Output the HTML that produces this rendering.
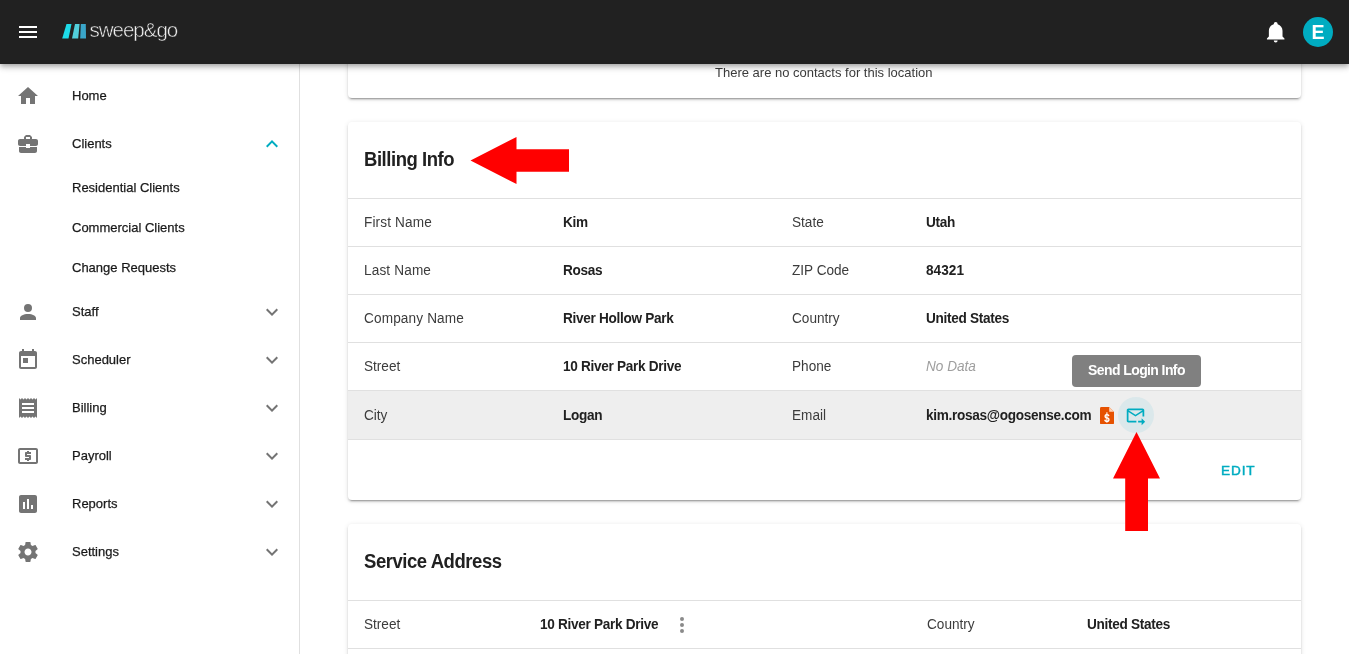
<!DOCTYPE html>
<html>
<head>
<meta charset="utf-8">
<title>Sweep&amp;Go</title>
<style>
*{box-sizing:border-box;margin:0;padding:0}
html,body{width:1349px;height:654px;overflow:hidden;background:#fff;font-size:14px;line-height:16px;font-family:"Liberation Sans",sans-serif;color:rgba(0,0,0,.87)}
.abs{position:absolute}
#app{position:absolute;left:0;top:0;width:1349px;height:654px;overflow:hidden;background:#fff;will-change:transform}

/* top bar */
#bar{position:absolute;left:0;top:0;width:1349px;height:64px;background:#212121;z-index:10;
 box-shadow:0 2px 4px -1px rgba(0,0,0,.2),0 4px 5px 0 rgba(0,0,0,.14),0 1px 10px 0 rgba(0,0,0,.12)}
#burger{position:absolute;left:19px;top:26px;width:18px;height:12px}
#burger i{position:absolute;left:0;width:18px;height:2px;background:#fff}
#logo{position:absolute;left:62px;top:22px}
#bell{position:absolute;left:1264.300px;top:20px}
#avatar{position:absolute;left:1303px;top:17px;width:30px;height:30px;border-radius:50%;background:#00acc1;color:#fff;
 font-weight:bold;font-size:19.600px;line-height:30.700px;text-align:center}

/* sidebar */
#side{position:absolute;left:0;top:64px;width:300px;height:590px;background:#fff;border-right:1px solid #e0e0e0;z-index:5}
.nav{position:absolute;left:72px;margin-top:.5px;font-size:13px;line-height:16px;color:rgba(0,0,0,.87);white-space:nowrap;-webkit-text-stroke:.25px rgba(0,0,0,.87)}
.ico{position:absolute;left:16px;width:24px;height:24px;fill:#747474}
.chev{position:absolute;left:260px;width:24px;height:24px;fill:#747474}

/* cards */
.card{position:absolute;left:348px;width:953px;background:#fff;border-radius:4px;
 box-shadow:0 3px 1px -2px rgba(0,0,0,.2),0 2px 2px 0 rgba(0,0,0,.14),0 1px 5px 0 rgba(0,0,0,.12)}
.title{position:absolute;left:16px;font-size:18.5px;line-height:22px;font-weight:bold;letter-spacing:-.45px;white-space:nowrap;color:#212121;transform:scaleY(1.07);transform-origin:0 17.400px}
.row{position:absolute;left:0;width:953px;height:48px;border-top:1px solid #e0e0e0}
.row span{position:absolute;top:16px;font-size:13.6px;line-height:16px;white-space:nowrap;transform:scaleY(1.06);transform-origin:0 12.700px}
.l{color:#3c3c3c}
.v{font-weight:bold;color:#212121;letter-spacing:-.3px}
.hl{background:#eeeeee}
.hl span{top:16.500px}
</style>
</head>
<body>
<div id="app">

<!-- cards -->
<div class="card" style="top:40px;height:58px">
  <span class="abs" style="left:367px;top:25px;font-size:13px;line-height:16px;white-space:nowrap;color:#3c3c3c">There are no contacts for this location</span>
</div>

<div class="card" style="top:122px;height:378px">
  <span class="title" style="top:27px">Billing Info</span>
  <div class="row" style="top:76px"><span class="l" style="left:16px;letter-spacing:.15px">First Name</span><span class="v" style="left:215px">Kim</span><span class="l" style="left:444px">State</span><span class="v" style="left:578px">Utah</span></div>
  <div class="row" style="top:124px"><span class="l" style="left:16px;letter-spacing:.15px">Last Name</span><span class="v" style="left:215px">Rosas</span><span class="l" style="left:444px">ZIP Code</span><span class="v" style="left:578px;letter-spacing:.05px">84321</span></div>
  <div class="row" style="top:172px"><span class="l" style="left:16px;letter-spacing:.15px">Company Name</span><span class="v" style="left:215px">River Hollow Park</span><span class="l" style="left:444px">Country</span><span class="v" style="left:578px">United States</span></div>
  <div class="row" style="top:220px"><span class="l" style="left:16px">Street</span><span class="v" style="left:215px">10 River Park Drive</span><span class="l" style="left:444px">Phone</span><span style="left:578px;font-style:italic;color:#9e9e9e">No Data</span></div>
  <div class="row hl" style="top:268px;height:50px;border-bottom:1px solid #e0e0e0"><span class="l" style="left:16px">City</span><span class="v" style="left:215px">Logan</span><span class="l" style="left:444px">Email</span><span class="v" style="left:578px">kim.rosas@ogosense.com</span></div>
  <span class="abs" style="left:873px;top:340.500px;font-size:13.600px;line-height:16px;letter-spacing:.9px;color:#00acc1;-webkit-text-stroke:.45px #00acc1">EDIT</span>
</div>

<div class="card" style="top:524px;height:140px">
  <span class="title" style="top:27px">Service Address</span>
  <div class="row" style="top:76px"><span class="l" style="left:16px">Street</span><span class="v" style="left:192px">10 River Park Drive</span><span class="l" style="left:579px">Country</span><span class="v" style="left:739px">United States</span></div>
  <div class="row" style="top:124px"></div>
</div>

<!-- overlays (page coordinates) -->
<div class="abs" id="tip" style="left:1072px;top:355px;width:129px;height:32px;border-radius:4px;background:#808080;color:#fff;font-size:14px;font-weight:bold;line-height:30px;text-align:center;letter-spacing:-.6px;white-space:nowrap"><span style="display:inline-block;transform:scaleY(1.06);transform-origin:50% 19.700px">Send Login Info</span></div>
<div class="abs" id="halo" style="left:1118px;top:397px;width:36px;height:36px;border-radius:50%;background:#dbe8eb"></div>
<svg class="abs" id="mail" style="left:1125.200px;top:404.500px" width="21" height="21" viewBox="0 0 24 24" fill="#00acc1"><path d="M20 4H4c-1.1 0-2 .9-2 2v12c0 1.1.9 2 2 2h9v-2H4V8l8 5 8-5v5h2V6c0-1.1-.9-2-2-2zm-8 7L4 6h16l-8 5zm7 4l4 4-4 4v-3h-4v-2h4v-3z"/></svg>
<svg class="abs" id="inv" style="left:1100px;top:406.800px" width="14" height="17.400" viewBox="0 0 14 17.400"><path d="M1.400 0H9.200L14 4.800V16a1.400 1.400 0 0 1-1.400 1.400H1.400A1.400 1.400 0 0 1 0 16V1.400A1.400 1.400 0 0 1 1.400 0z" fill="#e65100"/><path d="M9.200 0v4.800H14z" fill="#ffd2b3"/><text transform="translate(6.900 14.600) scale(.8 1)" font-family="Liberation Sans" font-weight="bold" font-size="11" fill="#fff" text-anchor="middle">S</text><rect x="6.350" y="5.300" width="1.100" height="10.400" fill="#fff"/></svg>
<svg class="abs" id="dots" style="left:670px;top:613px" width="24" height="24" viewBox="0 0 24 24" fill="#8a8a8a"><path d="M12,16A2,2 0 0,1 14,18A2,2 0 0,1 12,20A2,2 0 0,1 10,18A2,2 0 0,1 12,16M12,10A2,2 0 0,1 14,12A2,2 0 0,1 12,14A2,2 0 0,1 10,12A2,2 0 0,1 12,10M12,4A2,2 0 0,1 14,6A2,2 0 0,1 12,8A2,2 0 0,1 10,6A2,2 0 0,1 12,4Z"/></svg>
<svg class="abs" id="arrows" style="left:0;top:0" width="1349" height="654" viewBox="0 0 1349 654"><polygon fill="#ff0000" points="470.500,160.500 516.500,137 516.500,149.300 569,149.300 569,171.800 516.500,171.800 516.500,184"/><polygon fill="#ff0000" points="1136.500,432 1160,478.500 1148,478.500 1148,531 1125.200,531 1125.200,478.500 1113,478.500"/></svg>

<!-- sidebar -->
<div id="side">
  <svg class="ico" style="top:20px" viewBox="0 0 24 24"><path d="M10,20V14H14V20H19V12H22L12,3L2,12H5V20H10Z"/></svg>
  <svg class="ico" style="top:68px" viewBox="0 0 24 24"><path d="M10 16v-1H3.01L3 19c0 1.11.89 2 2 2h14c1.11 0 2-.89 2-2v-4h-7v1h-4zm10-9h-4.01V5l-2-2h-4l-2 2v2H4c-1.1 0-2 .9-2 2v3c0 1.11.89 2 2 2h6v-2h4v2h6c1.1 0 2-.9 2-2V9c0-1.1-.9-2-2-2zm-6 0h-4V5h4v2z"/></svg>
  <svg class="ico" style="top:236px" viewBox="0 0 24 24"><path d="M12,4A4,4 0 0,1 16,8A4,4 0 0,1 12,12A4,4 0 0,1 8,8A4,4 0 0,1 12,4M12,14C16.42,14 20,15.79 20,18V20H4V18C4,15.79 7.58,14 12,14Z"/></svg>
  <svg class="ico" style="top:284px" viewBox="0 0 24 24"><path d="M19 3h-1V1h-2v2H8V1H6v2H5c-1.11 0-1.99.9-1.99 2L3 19c0 1.1.89 2 2 2h14c1.1 0 2-.9 2-2V5c0-1.1-.9-2-2-2zm0 16H5V8h14v11zM7 10h5v5H7z"/></svg>
  <svg class="ico" style="top:332px" viewBox="0 0 24 24"><path d="M18 17H6v-2h12v2zm0-4H6v-2h12v2zm0-4H6V7h12v2zM3 22l1.5-1.5L6 22l1.5-1.5L9 22l1.5-1.5L12 22l1.5-1.5L15 22l1.5-1.5L18 22l1.5-1.5L21 22V2l-1.5 1.5L18 2l-1.5 1.5L15 2l-1.5 1.5L12 2l-1.5 1.5L9 2 7.5 3.5 6 2 4.5 3.5 3 2v20z"/></svg>
  <svg class="ico" style="top:380px" viewBox="0 0 24 24"><path d="M11 17h2v-1h1c.55 0 1-.45 1-1v-3c0-.55-.45-1-1-1h-3v-1h4V8h-2V7h-2v1h-1c-.55 0-1 .45-1 1v3c0 .55.45 1 1 1h3v1H9v2h2v1zm9-13H4c-1.11 0-1.99.89-1.99 2L2 18c0 1.11.89 2 2 2h16c1.11 0 2-.89 2-2V6c0-1.11-.89-2-2-2zm0 14H4V6h16v12z"/></svg>
  <svg class="ico" style="top:428px" viewBox="0 0 24 24"><path d="M19 3H5c-1.1 0-2 .9-2 2v14c0 1.1.9 2 2 2h14c1.1 0 2-.9 2-2V5c0-1.1-.9-2-2-2zM9 17H7v-7h2v7zm4 0h-2V7h2v10zm4 0h-2v-4h2v4z"/></svg>
  <svg class="ico" style="top:476px" viewBox="0 0 24 24"><path d="M19.43 12.98c.04-.32.07-.64.07-.98s-.03-.66-.07-.98l2.11-1.65c.19-.15.24-.42.12-.64l-2-3.46c-.12-.22-.39-.3-.61-.22l-2.49 1c-.52-.4-1.08-.73-1.69-.98l-.38-2.65C14.46 2.18 14.25 2 14 2h-4c-.25 0-.46.18-.49.42l-.38 2.65c-.61.25-1.17.59-1.69.98l-2.49-1c-.23-.09-.49 0-.61.22l-2 3.46c-.13.22-.07.49.12.64l2.11 1.65c-.04.32-.07.65-.07.98s.03.66.07.98l-2.11 1.65c-.19.15-.24.42-.12.64l2 3.46c.12.22.39.3.61.22l2.49-1c.52.4 1.08.73 1.69.98l.38 2.65c.03.24.24.42.49.42h4c.25 0 .46-.18.49-.42l.38-2.65c.61-.25 1.17-.59 1.69-.98l2.49 1c.23.09.49 0 .61-.22l2-3.46c.12-.22.07-.49-.12-.64l-2.11-1.65zM12 15.5c-1.93 0-3.5-1.57-3.5-3.5s1.57-3.5 3.5-3.5 3.5 1.57 3.5 3.5-1.57 3.5-3.5 3.5z"/></svg>
  <svg class="chev" style="top:68px;fill:#00acc1" viewBox="0 0 24 24"><path d="M7.41,15.41L12,10.83L16.59,15.41L18,14L12,8L6,14L7.41,15.41Z"/></svg>
  <svg class="chev" style="top:236px" viewBox="0 0 24 24"><path d="M7.41,8.58L12,13.17L16.59,8.58L18,10L12,16L6,10L7.41,8.58Z"/></svg>
  <svg class="chev" style="top:284px" viewBox="0 0 24 24"><path d="M7.41,8.58L12,13.17L16.59,8.58L18,10L12,16L6,10L7.41,8.58Z"/></svg>
  <svg class="chev" style="top:332px" viewBox="0 0 24 24"><path d="M7.41,8.58L12,13.17L16.59,8.58L18,10L12,16L6,10L7.41,8.58Z"/></svg>
  <svg class="chev" style="top:380px" viewBox="0 0 24 24"><path d="M7.41,8.58L12,13.17L16.59,8.58L18,10L12,16L6,10L7.41,8.58Z"/></svg>
  <svg class="chev" style="top:428px" viewBox="0 0 24 24"><path d="M7.41,8.58L12,13.17L16.59,8.58L18,10L12,16L6,10L7.41,8.58Z"/></svg>
  <svg class="chev" style="top:476px" viewBox="0 0 24 24"><path d="M7.41,8.58L12,13.17L16.59,8.58L18,10L12,16L6,10L7.41,8.58Z"/></svg>
  <span class="nav" style="top:23px">Home</span>
  <span class="nav" style="top:71px">Clients</span>
  <span class="nav" style="top:115px">Residential Clients</span>
  <span class="nav" style="top:155px">Commercial Clients</span>
  <span class="nav" style="top:195px">Change Requests</span>
  <span class="nav" style="top:239px">Staff</span>
  <span class="nav" style="top:287px">Scheduler</span>
  <span class="nav" style="top:335px">Billing</span>
  <span class="nav" style="top:383px">Payroll</span>
  <span class="nav" style="top:431px">Reports</span>
  <span class="nav" style="top:479px">Settings</span>
</div>

<!-- top bar -->
<div id="bar">
  <div id="burger"><i style="top:0"></i><i style="top:5px"></i><i style="top:10px"></i></div>
  <svg class="abs" id="logobars" style="left:60px;top:22px" width="28" height="18" viewBox="60 22 28 18">
    <polygon fill="#1ddbe8" points="66.500,24 71.500,24 68.500,38.500 62.200,38.500"/>
    <polygon fill="#52cfdb" points="75,24 79.600,24 78.200,38.500 72,38.500"/>
    <polygon fill="#3aa6ca" points="80.800,24 85.800,24 86,38.500 80.200,38.500"/>
  </svg>
  <span class="abs" id="logotxt" style="left:89.500px;top:18.200px;font-size:20.500px;line-height:24px;letter-spacing:-1px;color:#efefef;-webkit-text-stroke:.5px #212121;white-space:nowrap">sweep&amp;go</span>
  <svg id="bell" width="23.400" height="23.400" viewBox="0 0 24 24" fill="#fff"><path d="M21,19V20H3V19L5,17V11C5,7.9 7.03,5.17 10,4.29C10,4.19 10,4.1 10,4A2,2 0 0,1 12,2A2,2 0 0,1 14,4C14,4.1 14,4.19 14,4.29C16.97,5.17 19,7.9 19,11V17L21,19M14,21A2,2 0 0,1 12,23A2,2 0 0,1 10,21"/></svg>
  <div id="avatar">E</div>
</div>

</div>
</body>
</html>
